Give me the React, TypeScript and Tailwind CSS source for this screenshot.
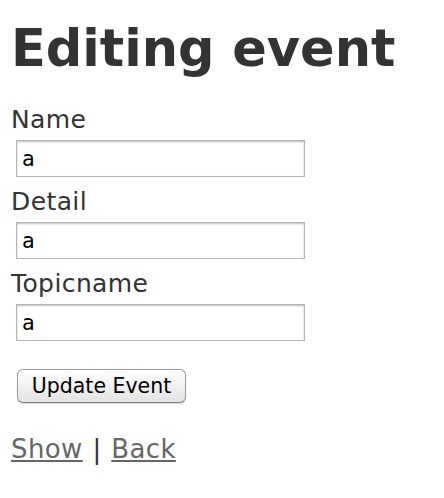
import React from 'react';

const fields = ['Name', 'Detail', 'Topicname'];

export default function App() {
  return (
    <div className="min-h-screen bg-white pl-[11px] pt-[19px] text-[#333] font-['DejaVu_Sans',Verdana,sans-serif]">
      <h1 className="text-[51px] leading-[60px] font-bold">Editing event</h1>

      <form className="mt-[27px]" onSubmit={(e) => e.preventDefault()}>
        {fields.map((f) => (
          <div key={f} className="mb-[11px]">
            <label className="block text-[25px] leading-[28px] tracking-[0.4px]">{f}</label>
            <input
              type="text"
              defaultValue="a"
              className="mt-[6px] ml-[5px] block h-[37px] w-[289px] border border-[#b5b5b5] bg-white pl-[5px] text-[21px] text-black font-['DejaVu_Sans_Mono',monospace] shadow-[inset_0_1px_2px_rgba(0,0,0,0.25)] outline-none"
            />
          </div>
        ))}

        <button
          type="submit"
          className="mt-[17px] ml-[6px] h-[34px] w-[169px] rounded-[6px] border border-[#9a9a9a] border-b-[#808080] bg-gradient-to-b from-white to-[#e3e3e3] text-[20.5px] text-black shadow-[0_1px_1px_rgba(0,0,0,0.15)]"
        >
          Update Event
        </button>
      </form>

      <p className="mt-[32px] text-[26px] leading-[28px] tracking-[0.4px] [word-spacing:1px]">
        <a href="#" className="text-[#666] underline">Show</a> |{' '}
        <a href="#" className="text-[#666] underline">Back</a>
      </p>
    </div>
  );
}
